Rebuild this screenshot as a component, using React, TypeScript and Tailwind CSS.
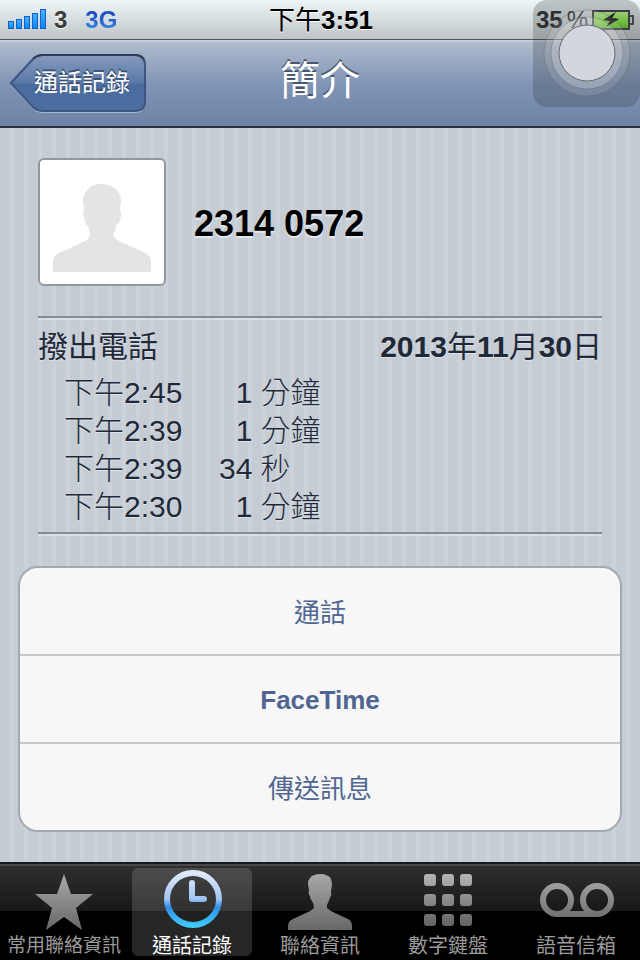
import type { ReactNode } from 'react';

interface Call {
    id: number;
    time: string;
    amount: string;
    unit: string;
}

const calls: Call[] = [
    { id: 1, time: '下午2:45', amount: '1', unit: '分鐘' },
    { id: 2, time: '下午2:39', amount: '1', unit: '分鐘' },
    { id: 3, time: '下午2:39', amount: '34', unit: '秒' },
    { id: 4, time: '下午2:30', amount: '1', unit: '分鐘' },
];

function StatusBar() {
    return (
        <header className="h-10 pl-2 pr-1.5 grid grid-cols-3 items-center bg-linear-to-b from-[#eef6f9] to-[#bfc5c6] border-b border-[#50565c]">
            <div className="flex items-center text-2xl font-bold text-[#3c3c3e] [text-shadow:0_1px_0_#fff]">
                <svg width="38" height="22" viewBox="0 0 38 22" className="mr-2" aria-hidden="true">
                    <defs>
                        <linearGradient id="signal" x1="0" y1="0" x2="0" y2="1">
                            <stop offset="0" stopColor="#3fb4ff" />
                            <stop offset="1" stopColor="#1184f2" />
                        </linearGradient>
                    </defs>
                    <g fill="url(#signal)" stroke="#1560c8" strokeWidth="1">
                        <rect x="0.500" y="12.500" width="5" height="7" />
                        <rect x="8.500" y="10.500" width="5" height="9" />
                        <rect x="16.500" y="7.500" width="5" height="12" />
                        <rect x="24.500" y="4.500" width="5" height="15" />
                        <rect x="32.500" y="0.500" width="5" height="19" />
                    </g>
                </svg>
                <span>3</span>
                <span className="ml-4.5 bg-linear-to-b from-[#1435a8] via-[#2a5fd0] to-[#3fa0f4] bg-clip-text text-transparent [text-shadow:none]">3G</span>
            </div>
            <div className="text-center text-[26px] leading-8 font-bold text-black whitespace-nowrap [text-shadow:0_1px_0_#fff]">
                <span className="font-normal">下午</span>3:51
            </div>
            <div className="flex items-center justify-end text-2xl text-[#2c2c2e] whitespace-nowrap">
                <span className="font-bold">35</span>
                <span className="mx-1">%</span>
                <svg width="42" height="20" viewBox="0 0 42 20" aria-hidden="true">
                    <defs>
                        <linearGradient id="battery" x1="0" y1="0" x2="0" y2="1">
                            <stop offset="0" stopColor="#c9ff9a" />
                            <stop offset="0.500" stopColor="#8ff04a" />
                            <stop offset="1" stopColor="#62c822" />
                        </linearGradient>
                    </defs>
                    <rect x="1" y="1" width="36" height="18" fill="url(#battery)" stroke="#3c4146" strokeWidth="2" />
                    <path d="M37 6 H41 V14 H37" fill="none" stroke="#4a4e52" strokeWidth="2" />
                    <path d="M24 2 L11 10 L18 11 L14 17 L27 9 L20 8 Z" fill="#111" />
                </svg>
            </div>
        </header>
    );
}

function NavBar() {
    return (
        <nav className="h-22 px-2.5 grid grid-cols-[1fr_auto_1fr] items-center border-t-2 border-t-[#c6cfdb] border-b-2 border-b-[#2b3140] bg-linear-to-b from-[#b0bdcd] via-[#8094b6] to-[#6d83a5]">
            <button className="relative isolate w-[136px] h-[60px] pl-6 pr-3.5 pb-0.5 flex items-center text-2xl font-normal text-white whitespace-nowrap [text-shadow:0_-2px_0_#3c506f]">
                <svg viewBox="0 0 136 60" className="absolute inset-0 -z-10 size-full" aria-hidden="true">
                    <defs>
                        <linearGradient id="back" x1="0" y1="0" x2="0" y2="1">
                            <stop offset="0" stopColor="#869bbd" />
                            <stop offset="0.500" stopColor="#5a78a8" />
                            <stop offset="0.520" stopColor="#4a6b9e" />
                            <stop offset="1" stopColor="#4c6e9f" />
                        </linearGradient>
                    </defs>
                    <path d="M33 3 H125 Q135 3 135 13 V49 Q135 59 125 59 H33 Q27 59 23 55 L1 31 L23 7 Q27 3 33 3 Z" fill="#a9b8cf" />
                    <path d="M33 1 H125 Q135 1 135 11 V47 Q135 57 125 57 H33 Q27 57 23 53 L1 29 L23 5 Q27 1 33 1 Z" fill="url(#back)" stroke="#3d5580" strokeWidth="2" />
                    <path d="M23 5 Q27 1 33 1 H125 Q131 1 134 6" fill="none" stroke="#2f3e5a" strokeWidth="2" />
                </svg>
                通話記錄
            </button>
            <h1 className="text-[40px] leading-12 pb-1.5 font-normal text-white [text-shadow:0_-2px_0_#4a566b]">簡介</h1>
        </nav>
    );
}

function ContactHeader() {
    return (
        <div className="mx-5 flex items-center gap-7">
            <div className="size-32 shrink-0 p-3 flex items-end justify-center bg-white border-2 border-[#94979c] rounded-md">
                <svg viewBox="0 0 98 88" className="w-[98px] h-22" role="img" aria-label="聯絡資訊">
                    <path
                        d="M48 0 C56 0 63 3 66 9 Q68 13 68 17 L67 25 Q69 31 67 36 Q66 40 63 41 Q62 48 60 51 Q62 55 66 57 C74 61 84 65 92 69 Q98 72 98 78 V88 H0 V78 Q0 72 6 69 C15 65 26 60 34 56 Q37 53 37 50 Q36 46 35 42 Q32 41 32 36 Q29 31 31 25 L30 16 Q30 11 33 8 C36 2 42 0 48 0 Z"
                        fill="#e4e4e4"
                    />
                </svg>
            </div>
            <h2 className="pt-1 text-4xl font-bold text-black [text-shadow:0_2px_0_#e3e8ee]">2314 0572</h2>
        </div>
    );
}

function CallHistory() {
    return (
        <section className="mx-5 mt-7.5 pt-2.5 pb-1.5 border-y-2 border-[#868b95] shadow-[0_2px_0_#dadee6,inset_0_2px_0_#dadee6] text-[30px] leading-[38px] text-[#1f2937] [text-shadow:0_1px_0_#dde2e8]">
            <div className="mb-2 flex items-center justify-between">
                <h3 className="font-normal">撥出電話</h3>
                <p className="font-bold">
                    2013<span className="font-normal">年</span>11<span className="font-normal">月</span>30<span className="font-normal">日</span>
                </p>
            </div>
            <table className="ml-6.5">
                <tbody>
                    {calls.map((call) => (
                        <tr key={call.id}>
                            <td className="p-0 font-light">{call.time}</td>
                            <td className="w-[70px] p-0 text-right">{call.amount}</td>
                            <td className="p-0 pl-2 font-light">{call.unit}</td>
                        </tr>
                    ))}
                </tbody>
            </table>
        </section>
    );
}

function Actions() {
    return (
        <div className="mt-8 flex flex-col divide-y-2 divide-[#c6c8ca] bg-[#f7f7f7] border-2 border-[#a3a9b0] rounded-[20px] overflow-hidden text-[26px] leading-8 text-[#4f6691]">
            <button className="h-22 pt-1 font-normal">通話</button>
            <button className="h-22 pt-0.5 font-bold">FaceTime</button>
            <button className="h-[86px] pt-1 font-normal">傳送訊息</button>
        </div>
    );
}

function StarIcon() {
    return (
        <svg width="58" height="60" viewBox="0 -4 58 60" aria-hidden="true">
            <path d="M29 0 L36 20 H58 L41 34 L47 56 L29 43 L11 56 L17 34 L0 20 H22 Z" fill="url(#gray)" />
        </svg>
    );
}

function ClockIcon() {
    return (
        <svg width="58" height="60" viewBox="0 0 58 60" className="ml-0.5" aria-hidden="true">
            <defs>
                <linearGradient id="blue" gradientUnits="userSpaceOnUse" x1="0" y1="0" x2="0" y2="58">
                    <stop offset="0" stopColor="#e6edfb" />
                    <stop offset="0.500" stopColor="#a3c5f4" />
                    <stop offset="0.640" stopColor="#2f8fe8" />
                    <stop offset="1" stopColor="#42d0fc" />
                </linearGradient>
            </defs>
            <circle cx="29" cy="29" r="26" fill="#000" fillOpacity="0.15" stroke="url(#blue)" strokeWidth="6" />
            <path d="M28 13 V29 H40" fill="none" stroke="url(#blue)" strokeWidth="6" strokeLinecap="round" strokeLinejoin="round" />
        </svg>
    );
}

function PersonIcon() {
    return (
        <svg width="64" height="60" viewBox="0 -4 64 60" aria-hidden="true">
            <path
                d="M32 0 C37 0 42 2 43 5 Q44 8 44 11 L43 17 Q44 21 42 24 Q40 29 39 31 V34 Q42 37 47 39 L60 45 Q64 47 64 52 V56 H0 V52 Q0 47 5 45 L18 39 Q23 37 26 34 Q26 30 24 27 Q22 25 22 22 Q20 20 21 16 L20 10 Q20 6 22 4 C24 1 28 0 32 0 Z"
                fill="url(#gray)"
            />
        </svg>
    );
}

function KeypadIcon() {
    return (
        <svg width="48" height="52" viewBox="0 0 48 52" aria-hidden="true">
            <g fill="url(#gray-fixed)">
                {[0, 20, 40].map((y) => [0, 18, 36].map((x) => <rect key={`${x}-${y}`} x={x} y={y} width="12" height="12" rx="3" />))}
            </g>
        </svg>
    );
}

function VoicemailIcon() {
    return (
        <svg width="74" height="34" viewBox="0 0 74 34" className="ml-0.5" aria-hidden="true">
            <g fill="none" stroke="url(#gray-short)" strokeWidth="6">
                <circle cx="17" cy="17" r="14" />
                <circle cx="57" cy="17" r="14" />
                <path d="M17 31 H57" />
            </g>
        </svg>
    );
}

interface TabProps {
    label: string;
    icon: ReactNode;
    active?: boolean;
    small?: boolean;
}

function Tab({ label, icon, active, small }: TabProps) {
    return (
        <button
            className={`h-22 mx-1 flex flex-1 basis-0 flex-col items-center rounded-md whitespace-nowrap leading-7 font-normal ${
                active ? 'bg-white/15 text-white' : 'text-[#9b9b9b]'
            } ${small ? 'text-[19px]' : 'text-xl'}`}
        >
            <span className="h-16 shrink-0 flex items-center justify-center">{icon}</span>
            {label}
        </button>
    );
}

function TabBar() {
    return (
        <footer className="h-[98px] pt-1 flex border-t-2 border-[#15181c] bg-[linear-gradient(#484848_0,#484848_2px,#2e2e2e_2px,#181818_47px,#000_47px)]">
            <svg width="0" height="0" className="absolute" aria-hidden="true">
                <defs>
                    <linearGradient id="gray" x1="0" y1="0" x2="0" y2="1">
                        <stop offset="0" stopColor="#a8a8a8" />
                        <stop offset="1" stopColor="#686868" />
                    </linearGradient>
                    <linearGradient id="gray-fixed" gradientUnits="userSpaceOnUse" x1="0" y1="0" x2="0" y2="52">
                        <stop offset="0" stopColor="#b4b4b4" />
                        <stop offset="1" stopColor="#626262" />
                    </linearGradient>
                    <linearGradient id="gray-short" gradientUnits="userSpaceOnUse" x1="0" y1="0" x2="0" y2="34">
                        <stop offset="0" stopColor="#a0a0a0" />
                        <stop offset="1" stopColor="#707070" />
                    </linearGradient>
                </defs>
            </svg>
            <Tab label="常用聯絡資訊" icon={<StarIcon />} small />
            <Tab label="通話記錄" icon={<ClockIcon />} active />
            <Tab label="聯絡資訊" icon={<PersonIcon />} />
            <Tab label="數字鍵盤" icon={<KeypadIcon />} />
            <Tab label="語音信箱" icon={<VoicemailIcon />} />
        </footer>
    );
}

// Floating AssistiveTouch button
function AssistiveTouch() {
    return (
        <button aria-label="AssistiveTouch" className="absolute top-0 right-0 w-[107px] h-[107px] rounded-[14px] bg-[#303438]/25 overflow-hidden">
            <svg viewBox="0 0 107 107" className="size-full" aria-hidden="true">
                <g stroke="#555b64" strokeOpacity="0.3" strokeWidth="1">
                    <circle cx="54" cy="53" r="43" fill="#fff" fillOpacity="0.12" />
                    <circle cx="54" cy="53" r="36" fill="#fff" fillOpacity="0.22" />
                </g>
                <circle cx="54" cy="53" r="28" fill="#d3d6dc" stroke="#666a70" strokeWidth="1" />
            </svg>
        </button>
    );
}

export default function App() {
    return (
        <div className="relative min-h-screen flex flex-col font-['Liberation_Sans','Noto_Sans_CJK_TC',sans-serif] bg-[repeating-linear-gradient(90deg,#c5ccd4_0,#c5ccd4_10px,#cbd2d9_10px,#cbd2d9_14px)]">
            <StatusBar />
            <NavBar />
            <main className="flex-1 px-4.5 pt-7.5 pb-7.5">
                <ContactHeader />
                <CallHistory />
                <Actions />
            </main>
            <TabBar />
            <AssistiveTouch />
        </div>
    );
}
